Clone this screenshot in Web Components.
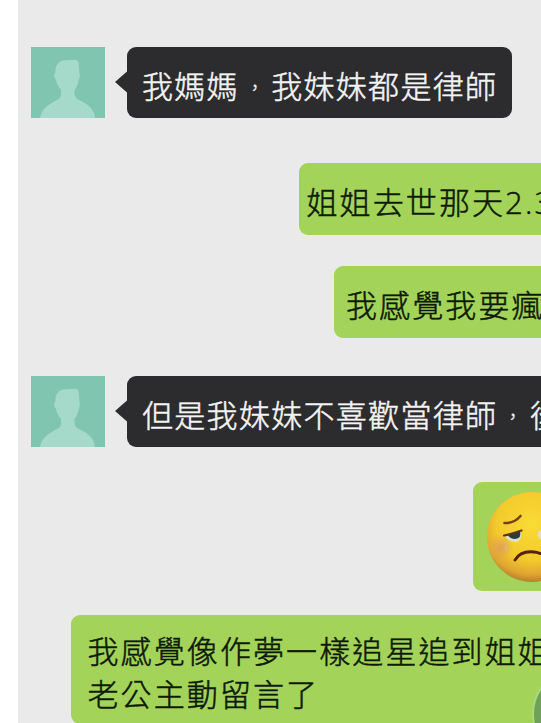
<!DOCTYPE html>
<html lang="zh-Hant">
<head>
    <meta charset="UTF-8">
    <title>Chat</title>
    <style>
        body {
            margin: 0;
            background: #fff;
            font-family: "Open Sans", "Noto Sans CJK TC", sans-serif;
            overflow: hidden;
        }
    </style>
</head>
<body>
    <chat-window>
        <chat-message side="in">我媽媽<small-mark>，</small-mark>我妹妹都是律師</chat-message>
        <chat-message side="out" style="--indent: 281px; --gap: 45px; --pad: 8px">姐姐去世那天2.3</chat-message>
        <chat-message side="out" style="--indent: 316.5px; --gap: 31.5px; --pad: 12px">我感覺我要瘋</chat-message>
        <chat-message side="in" style="--gap: 38px">但是我妹妹不喜歡當律師<small-mark>，</small-mark>後</chat-message>
        <chat-message side="out" style="--indent: 455px; --gap: 35px; --pad: 13px; --height: 109px"><sad-face></sad-face></chat-message>
        <chat-message side="out" style="--indent: 53px; --gap: 24px; --pad: 17px; --height: 109px">我感覺像作夢一樣追星追到姐姐<br>老公主動留言了</chat-message>
        <float-button></float-button>
    </chat-window>

    <script>
        class ChatWindow extends HTMLElement {
            constructor() {
                super();
                this.attachShadow({ mode: 'open' });
                this.shadowRoot.innerHTML = `
        <style>
        :host {
            display: flex;
            flex-direction: column;
            position: relative;
            box-sizing: border-box;
            height: 723px;
            margin-left: 17.5px;
            padding-top: 46.5px;
            background: #eaeaea;
            overflow: hidden;
        }
        </style>
        <slot></slot>
                `;
            }
        }
        customElements.define('chat-window', ChatWindow);


        class UserAvatar extends HTMLElement {
            constructor() {
                super();
                this.attachShadow({ mode: 'open' });
                this.shadowRoot.innerHTML = `
        <style>
        :host {
            display: block;
            flex: none;
            width: 74px;
            height: 71.5px;
            background: #80c5b0;
        }

        svg {
            display: block;
        }
        </style>
        <svg width="74" height="71.5" viewBox="0 0 74 71.5">
            <path fill="#a5d9c9" d="M9 71.5C10 61 20 56 27 52.5Q30 51 30 47V43C27 39 25.5 36 25 33Q22.5 31 23.5 27L24.5 25C24 18 28 13.5 34 13.2L45 12.8Q48 14 47.8 18L48.5 26Q49.5 31 47.5 33Q47 39 43.5 43V47Q44 51 48 53C57 57 63.5 62 64 71.5Z"/>
        </svg>
                `;
            }
        }
        customElements.define('user-avatar', UserAvatar);


        // full-width punctuation drawn smaller, it keeps the width of one character
        class SmallMark extends HTMLElement {
            constructor() {
                super();
                this.attachShadow({ mode: 'open' });
                this.shadowRoot.innerHTML = `
        <style>
        :host {
            display: inline-block;
            transform: translateY(1px) scale(0.62);
        }
        </style>
        <slot></slot>
                `;
            }
        }
        customElements.define('small-mark', SmallMark);


        class ChatMessage extends HTMLElement {
            constructor() {
                super();
                this.attachShadow({ mode: 'open' });
                this.shadowRoot.innerHTML = `
        <style>
        :host {
            display: flex;
            flex: none;
            margin-top: var(--gap, 0);
        }

        .bubble {
            display: flex;
            flex: none;
            align-items: center;
            box-sizing: border-box;
            height: var(--height, 71.5px);
            border-radius: 9px;
            font-size: 31px;
            line-height: 43px;
            font-weight: 300;
            white-space: nowrap;
            -webkit-text-stroke: 0.5px;
        }

        :host([side="in"]) {
            padding-left: 13.5px;
        }

        :host([side="in"]) .bubble {
            padding: 8px 15px 0 15px;
            background: #2c2c2e;
            color: #f4f4f4;
            letter-spacing: 1.3px;
        }

        :host([side="out"]) {
            padding-left: var(--indent);
        }

        :host([side="out"]) .bubble {
            min-width: 560px;
            padding: 7px 20px 0 var(--pad);
            background: #a4d35a;
            color: #0c1a06;
            letter-spacing: 2.1px;
        }

        .tail {
            display: none;
            flex: none;
            align-self: center;
            margin-left: 9.5px;
        }

        user-avatar {
            display: none;
        }

        :host([side="in"]) .tail,
        :host([side="in"]) user-avatar {
            display: block;
        }
        </style>
        <user-avatar></user-avatar>
        <svg class="tail" width="12.5" height="24" viewBox="0 0 12.5 24">
            <path fill="#2c2c2e" d="M0 12L12.5 1V23Z"/>
        </svg>
        <div class="bubble">
            <div><slot></slot></div>
        </div>
                `;
            }
        }
        customElements.define('chat-message', ChatMessage);


        class SadFace extends HTMLElement {
            constructor() {
                super();
                this.attachShadow({ mode: 'open' });
                this.shadowRoot.innerHTML = `
        <style>
        :host {
            display: block;
            width: 92px;
            height: 92px;
            margin-top: -6px;
        }

        svg {
            display: block;
        }
        </style>
        <svg width="92" height="92" viewBox="0 0 92 92">
            <defs>
                <radialGradient id="skin" cx="0.5" cy="0.36" r="0.66">
                    <stop offset="0" stop-color="#fadb35"/>
                    <stop offset="0.6" stop-color="#f3ca2c"/>
                    <stop offset="0.84" stop-color="#e0a631"/>
                    <stop offset="1" stop-color="#a9782a"/>
                </radialGradient>
                <radialGradient id="blush">
                    <stop offset="0" stop-color="#dc8f68" stop-opacity="0.65"/>
                    <stop offset="1" stop-color="#dc8f68" stop-opacity="0"/>
                </radialGradient>
            </defs>
            <circle cx="46" cy="46" r="45" fill="url(#skin)"/>
            <ellipse cx="15" cy="56" rx="13" ry="13" fill="url(#blush)"/>
            <ellipse cx="77" cy="56" rx="13" ry="13" fill="url(#blush)"/>
            <path d="M19 45Q27 42 35 40Q37 50 29 51Q22 51 19 45Z" fill="#dfe0c4"/>
            <path d="M22 44L34 40.5Q36 47 29 48Q24 48 22 44Z" fill="#263c48"/>
            <path d="M18 44.5Q27 42.5 35.5 39.5" fill="none" stroke="#5b3613" stroke-width="2.2" stroke-linecap="round"/>
            <path d="M73 45Q65 42 57 40Q51 38 52 45Q56 52 63 51Q70 51 73 45Z" fill="#dfe0c4"/>
            <path d="M70 44L58 40.5Q56 47 63 48Q68 48 70 44Z" fill="#263c48"/>
            <path d="M18.5 32Q28 32.5 34.5 25" fill="none" stroke="#77420f" stroke-width="2.6" stroke-linecap="round"/>
            <path d="M73.5 32Q64 32.5 57.5 25" fill="none" stroke="#77420f" stroke-width="2.6" stroke-linecap="round"/>
            <path d="M29 69C35 58 54 58 63 69" fill="none" stroke="#572011" stroke-width="2.8" stroke-linecap="round"/>
            <path d="M20 53Q17.8 58 20 59.5Q22.2 58 20 53Z" fill="#d3b3ad"/>
        </svg>
                `;
            }
        }
        customElements.define('sad-face', SadFace);


        // round button over the lower right corner of the chat
        class FloatButton extends HTMLElement {
            constructor() {
                super();
                this.attachShadow({ mode: 'open' });
                this.shadowRoot.innerHTML = `
        <style>
        :host {
            display: block;
            position: absolute;
            left: 514.5px;
            top: 668px;
            box-sizing: border-box;
            width: 92px;
            height: 92px;
            border: 2px solid #a5dc7c;
            border-radius: 50%;
            background: #71a05a;
        }
        </style>
                `;
            }
        }
        customElements.define('float-button', FloatButton);
    </script>
</body>
</html>
